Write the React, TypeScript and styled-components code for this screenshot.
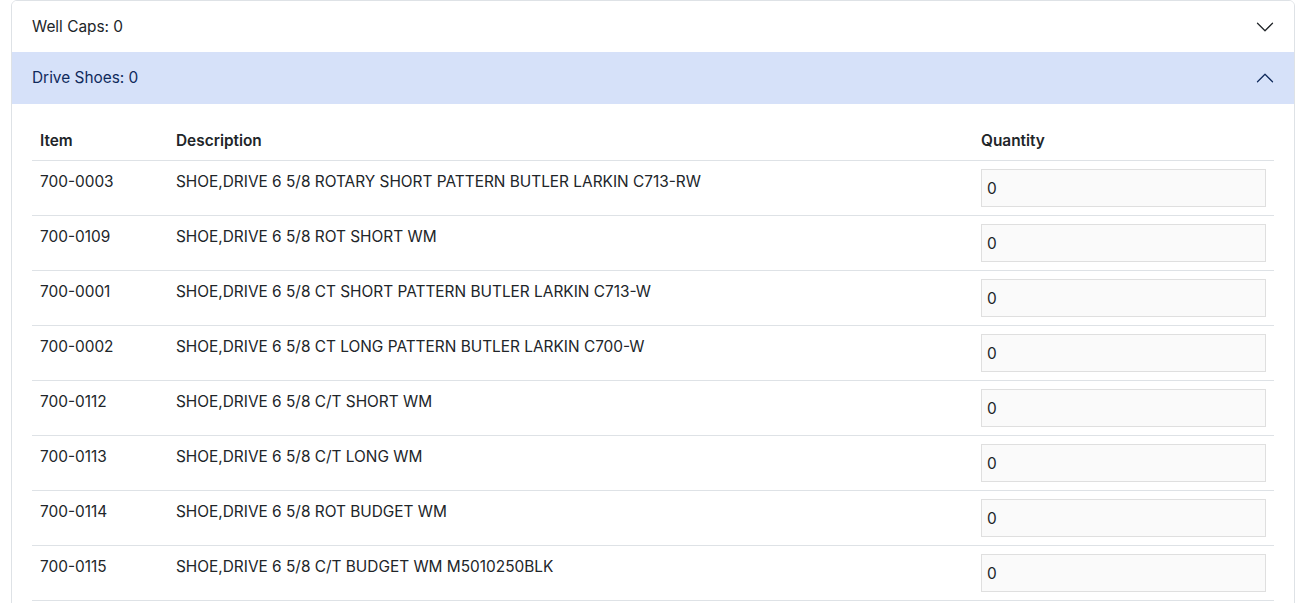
import React from "react";
import styled, { createGlobalStyle } from "styled-components";

const GlobalStyle = createGlobalStyle`
  * { box-sizing: border-box; }
  html, body { margin: 0; padding: 0; background: #ffffff; }
  body {
    font-family: Inter, "Noto Sans", "Liberation Sans", sans-serif;
    color: #212529;
    -webkit-font-smoothing: antialiased;
  }
`;

const Page = styled.div`
  padding: 0 13px 0 11px;
`;

const Accordion = styled.div`
  border: 1px solid #dee2e6;
  border-radius: 6px;
  overflow: hidden;
  background: #fff;
`;

const Item = styled.div``;

const Header = styled.button<{ $open?: boolean }>`
  display: flex;
  align-items: center;
  justify-content: space-between;
  width: 100%;
  height: ${(p) => (p.$open ? "52px" : "51px")};
  padding: 0 19px 0 20px;
  border: 0;
  margin: 0;
  font-family: inherit;
  font-size: 15.4px;
  line-height: 20px;
  text-align: left;
  cursor: pointer;
  background: ${(p) => (p.$open ? "#d6e1f9" : "#ffffff")};
  color: ${(p) => (p.$open ? "#102a5c" : "#212529")};
`;

const Chevron = styled.svg<{ $open?: boolean }>`
  width: 20px;
  height: 20px;
  flex-shrink: 0;
  transform: ${(p) => (p.$open ? "rotate(180deg)" : "none")};
`;

const Body = styled.div`
  padding: 16px 20px 16px 20px;
`;

const Table = styled.table`
  width: 100%;
  border-collapse: collapse;
  table-layout: fixed;
  font-size: 15.4px;
  line-height: 24px;
`;

const Th = styled.th`
  text-align: left;
  font-weight: 600;
  padding: 9px 8px 7px 8px;
  border-bottom: 1px solid #dee2e6;
  color: #212529;
`;

const Td = styled.td<{ $control?: boolean }>`
  padding: ${(p) => (p.$control ? "8px" : "9px 8px 7px 8px")};
  vertical-align: top;
  border-bottom: 1px solid #dee2e6;
  color: #212529;
`;

const QtyInput = styled.input`
  display: block;
  width: 100%;
  height: 38px;
  margin: 0;
  padding: 0 5px;
  border: 1px solid #dfdfdf;
  border-radius: 0;
  background: #fafafa;
  font-family: inherit;
  font-size: 15.4px;
  color: #212529;
  outline: none;
`;

const ChevronIcon = ({ open }: { open?: boolean }) => (
  <Chevron $open={open} viewBox="0 0 16 16" fill="none">
    <path
      d="M2 5L8 11L14 5"
      stroke={open ? "#102a5c" : "#212529"}
      strokeWidth="1"
      strokeLinecap="round"
      strokeLinejoin="round"
    />
  </Chevron>
);

const rows: [string, string][] = [
  ["700-0003", "SHOE,DRIVE 6 5/8 ROTARY SHORT PATTERN BUTLER LARKIN C713-RW"],
  ["700-0109", "SHOE,DRIVE 6 5/8 ROT SHORT WM"],
  ["700-0001", "SHOE,DRIVE 6 5/8 CT SHORT PATTERN BUTLER LARKIN C713-W"],
  ["700-0002", "SHOE,DRIVE 6 5/8 CT LONG PATTERN BUTLER LARKIN C700-W"],
  ["700-0112", "SHOE,DRIVE 6 5/8 C/T SHORT WM"],
  ["700-0113", "SHOE,DRIVE 6 5/8 C/T LONG WM"],
  ["700-0114", "SHOE,DRIVE 6 5/8 ROT BUDGET WM"],
  ["700-0115", "SHOE,DRIVE 6 5/8 C/T BUDGET WM M5010250BLK"],
];

export default function App() {
  return (
    <>
      <GlobalStyle />
      <Page>
        <Accordion>
          <Item>
            <Header>
              <span>Well Caps: 0</span>
              <ChevronIcon />
            </Header>
          </Item>
          <Item>
            <Header $open>
              <span>Drive Shoes: 0</span>
              <ChevronIcon open />
            </Header>
            <Body>
              <Table>
                <colgroup>
                  <col style={{ width: 136 }} />
                  <col style={{ width: 805 }} />
                  <col style={{ width: 301 }} />
                </colgroup>
                <thead>
                  <tr>
                    <Th>Item</Th>
                    <Th>Description</Th>
                    <Th>Quantity</Th>
                  </tr>
                </thead>
                <tbody>
                  {rows.map(([id, desc]) => (
                    <tr key={id}>
                      <Td>{id}</Td>
                      <Td>{desc}</Td>
                      <Td $control>
                        <QtyInput type="text" defaultValue="0" />
                      </Td>
                    </tr>
                  ))}
                </tbody>
              </Table>
            </Body>
          </Item>
        </Accordion>
      </Page>
    </>
  );
}
